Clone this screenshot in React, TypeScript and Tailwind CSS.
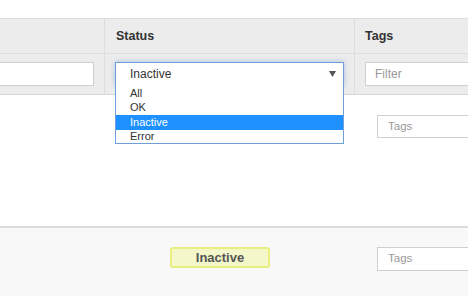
import React from "react";

export default function App() {
  const font = { fontFamily: '"Liberation Sans", Arial, sans-serif' };
  return (
    <div className="w-[468px] h-[296px] overflow-hidden bg-white text-[#333]" style={font}>
      <div className="h-[18px]" />
      {/* header row */}
      <div className="grid grid-cols-[104px_1px_249px_1px_113px] h-[36px] bg-[#ececec] border-y border-[#dddddd]">
        <div />
        <div className="bg-[#dddddd]" />
        <div className="flex items-center pl-[11px] font-bold text-[12.5px] text-[#333]">Status</div>
        <div className="bg-[#dddddd]" />
        <div className="flex items-center pl-[10px] font-bold text-[12.5px] text-[#333]">Tags</div>
      </div>
      {/* filter row */}
      <div className="grid grid-cols-[104px_1px_249px_1px_113px] h-[41px] bg-[#ececec] border-b border-[#d6d6d6]">
        <div className="overflow-hidden pt-[8px] pr-[10px]">
          <div className="-ml-2 h-[24px] bg-white border border-[#cfcfcf]" />
        </div>
        <div className="bg-[#dddddd]" />
        <div className="relative pt-[8px] pl-[10px] pr-[10px]">
          <div className="h-[24px] bg-white border border-[#6f9fd8] shadow-[0_0_5px_rgba(100,150,220,0.5)] flex items-center justify-between pl-[14px] pr-[7px] text-[12px] text-[#333]">
            <span>Inactive</span>
            <svg width="7" height="6" viewBox="0 0 7 6">
              <polygon points="0,0 7,0 3.5,6" fill="#555" />
            </svg>
          </div>
          <div className="absolute left-[10px] top-[31px] w-[229px] bg-white border border-[#6f9fd8] border-t-0 z-10 text-[11px] text-[#333] pt-px">
            <div className="h-[14px] leading-[14px] pl-[14px]">All</div>
            <div className="h-[15px] leading-[15px] pl-[14px]">OK</div>
            <div className="h-[15px] leading-[15px] pl-[14px] bg-[#1e90ff] text-white">Inactive</div>
            <div className="h-[13px] leading-[13px] pl-[14px]">Error</div>
          </div>
        </div>
        <div className="bg-[#dddddd]" />
        <div className="pt-[8px] pl-[10px]">
          <div className="h-[24px] bg-white border border-[#cfcfcf] border-r-0 flex items-center pl-[9px] text-[12px] text-[#999]">Filter</div>
        </div>
      </div>
      {/* body row 1 */}
      <div className="h-[131px] bg-white flex pt-[20px]">
        <div className="w-[377px]" />
        <div className="w-[91px] h-[23px] border border-[#cfcfcf] border-r-0 flex items-center pl-[10px] text-[11.5px] text-[#999]">Tags</div>
      </div>
      {/* body row 2 */}
      <div className="h-[72px] bg-[#f8f8f8] border-t-2 border-[#dcdcdc] flex pt-[19px]">
        <div className="w-[170px]" />
        <div className="w-[100px] h-[21px] rounded-[3px] border-2 border-[#e8ee80] bg-[#f3f7c9] flex items-center justify-center font-bold text-[13px] text-[#555]">Inactive</div>
        <div className="w-[107px]" />
        <div className="w-[91px] h-[24px] bg-white border border-[#cfcfcf] border-r-0 flex items-center pl-[10px] text-[11.5px] text-[#999]">Tags</div>
      </div>
    </div>
  );
}
